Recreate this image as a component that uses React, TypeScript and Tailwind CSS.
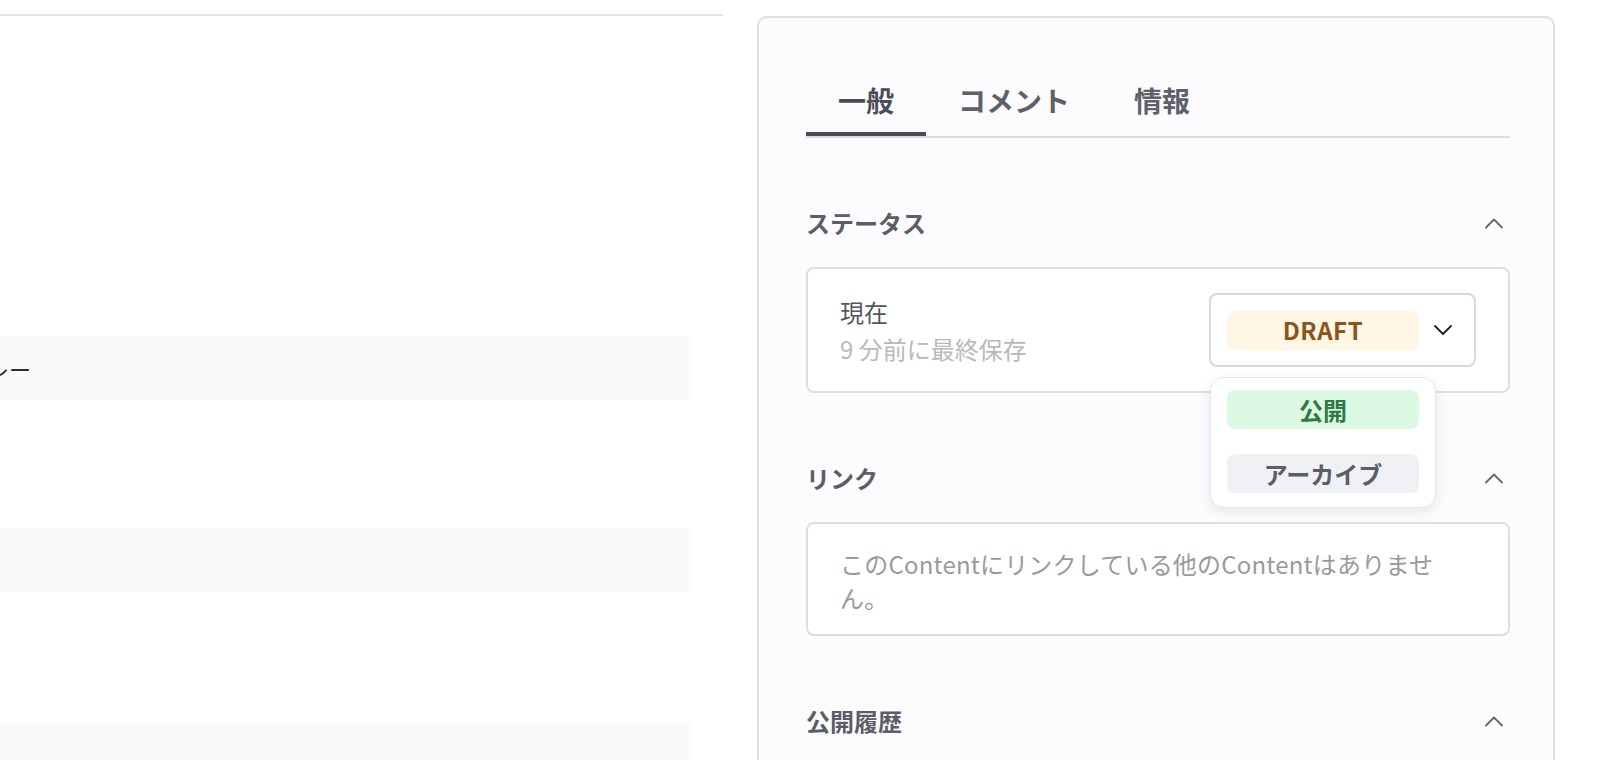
import React from "react";

const ChevronUp = ({ color = "#666" }: { color?: string }) => (
  <svg width="20" height="12" viewBox="0 0 20 12" fill="none">
    <polyline points="2,10.5 10,2.5 18,10.5" stroke={color} strokeWidth="1.8" strokeLinecap="round" strokeLinejoin="round" />
  </svg>
);

const ChevronDown = () => (
  <svg width="20" height="12" viewBox="0 0 20 12" fill="none">
    <polyline points="2,2 10,10 18,2" stroke="#1f1f1f" strokeWidth="1.8" strokeLinecap="round" strokeLinejoin="round" />
  </svg>
);

function SectionHeader({ title }: { title: string }) {
  return (
    <div className="mt-[68px] h-[34px] flex items-center justify-between">
      <span className="text-[24px] leading-[34px] font-bold text-[#5b5d68]">{title}</span>
      <span className="mr-[6px] flex items-center">
        <ChevronUp />
      </span>
    </div>
  );
}

export default function App() {
  const font = { fontFamily: '"Noto Sans CJK JP", "Noto Sans", sans-serif' };
  return (
    <div className="w-[1620px] h-[760px] overflow-hidden bg-white flex" style={font}>
      {/* Left content area */}
      <div className="w-[723px] shrink-0 pt-[14px]">
        <div className="border-t-2 border-[#e3e3e5] pr-[32px]">
          <div className="h-[320px]" />
          <div className="h-[64px] bg-[#fafafd] flex items-center overflow-hidden">
            <span className="ml-[-35px] text-[22px] text-[#2a2a2a] whitespace-nowrap">グレー</span>
          </div>
          <div className="h-[128px]" />
          <div className="h-[64px] bg-[#fafafd]" />
          <div className="h-[130px]" />
          <div className="h-[64px] bg-[#fafafd]" />
        </div>
      </div>

      {/* Right panel */}
      <div className="ml-[34px] mt-[16px] w-[798px] h-[820px] shrink-0 border-2 border-[#dedee0] rounded-[10px] bg-[#fcfcfe] pl-[47px] pr-[43px]">
        {/* Tabs */}
        <div className="mt-[62px] flex border-b-2 border-[#dcdcdf]">
          <button className="px-8 pb-3 text-[28px] leading-[40px] font-bold text-[#4a4c58] border-b-4 border-[#4a4c58]">
            一般
          </button>
          <button className="px-8 pb-3 text-[28px] leading-[40px] font-bold text-[#5f6069] border-b-4 border-transparent">
            コメント
          </button>
          <button className="px-8 pb-3 text-[28px] leading-[40px] font-bold text-[#5f6069] border-b-4 border-transparent">
            情報
          </button>
        </div>

        {/* Status */}
        <SectionHeader title="ステータス" />
        <div className="mt-[27px] relative border-2 border-[#dededf] rounded-lg bg-white px-8 py-6 flex items-center justify-between">
          <div>
            <div className="text-[24px] leading-[37px] text-[#55565c]">現在</div>
            <div className="text-[24px] leading-[37px] text-[#b9b9bc]">9 分前に最終保存</div>
          </div>
          <div className="relative">
            <div className="w-[267px] h-[74px] border-2 border-[#d9d9dc] rounded-lg bg-white pl-4 pr-[21px] flex items-center justify-between">
              <div className="w-[192px] h-[39px] rounded-lg bg-[#fff6e5] flex items-center justify-center text-[24px] font-bold tracking-wide text-[#8b5519]">
                DRAFT
              </div>
              <ChevronDown />
            </div>
            <div className="absolute z-10 left-[1px] top-[84px] w-[226px] rounded-[14px] border border-[#e6e6f3] bg-white shadow-[0_4px_12px_rgba(40,40,80,0.10)] px-4 pt-3 pb-[14px] flex flex-col gap-[25px]">
              <div className="h-[39px] rounded-lg bg-[#dcf9e3] flex items-center justify-center text-[24px] font-bold text-[#2e7a45]">
                公開
              </div>
              <div className="h-[39px] rounded-lg bg-[#f0f1f4] flex items-center justify-center text-[24px] font-bold text-[#5c5e66]">
                アーカイブ
              </div>
            </div>
          </div>
        </div>

        {/* Links */}
        <SectionHeader title="リンク" />
        <div className="mt-[27px] border-2 border-[#dededf] rounded-lg bg-white px-8 pt-[23px] pb-[19px]">
          <p className="w-[600px] text-[24px] leading-[34px] text-[#9a9a9e] tracking-[0.2px]">
            このContentにリンクしている他のContentはありません。
          </p>
        </div>

        {/* Publish history */}
        <SectionHeader title="公開履歴" />
      </div>
    </div>
  );
}
